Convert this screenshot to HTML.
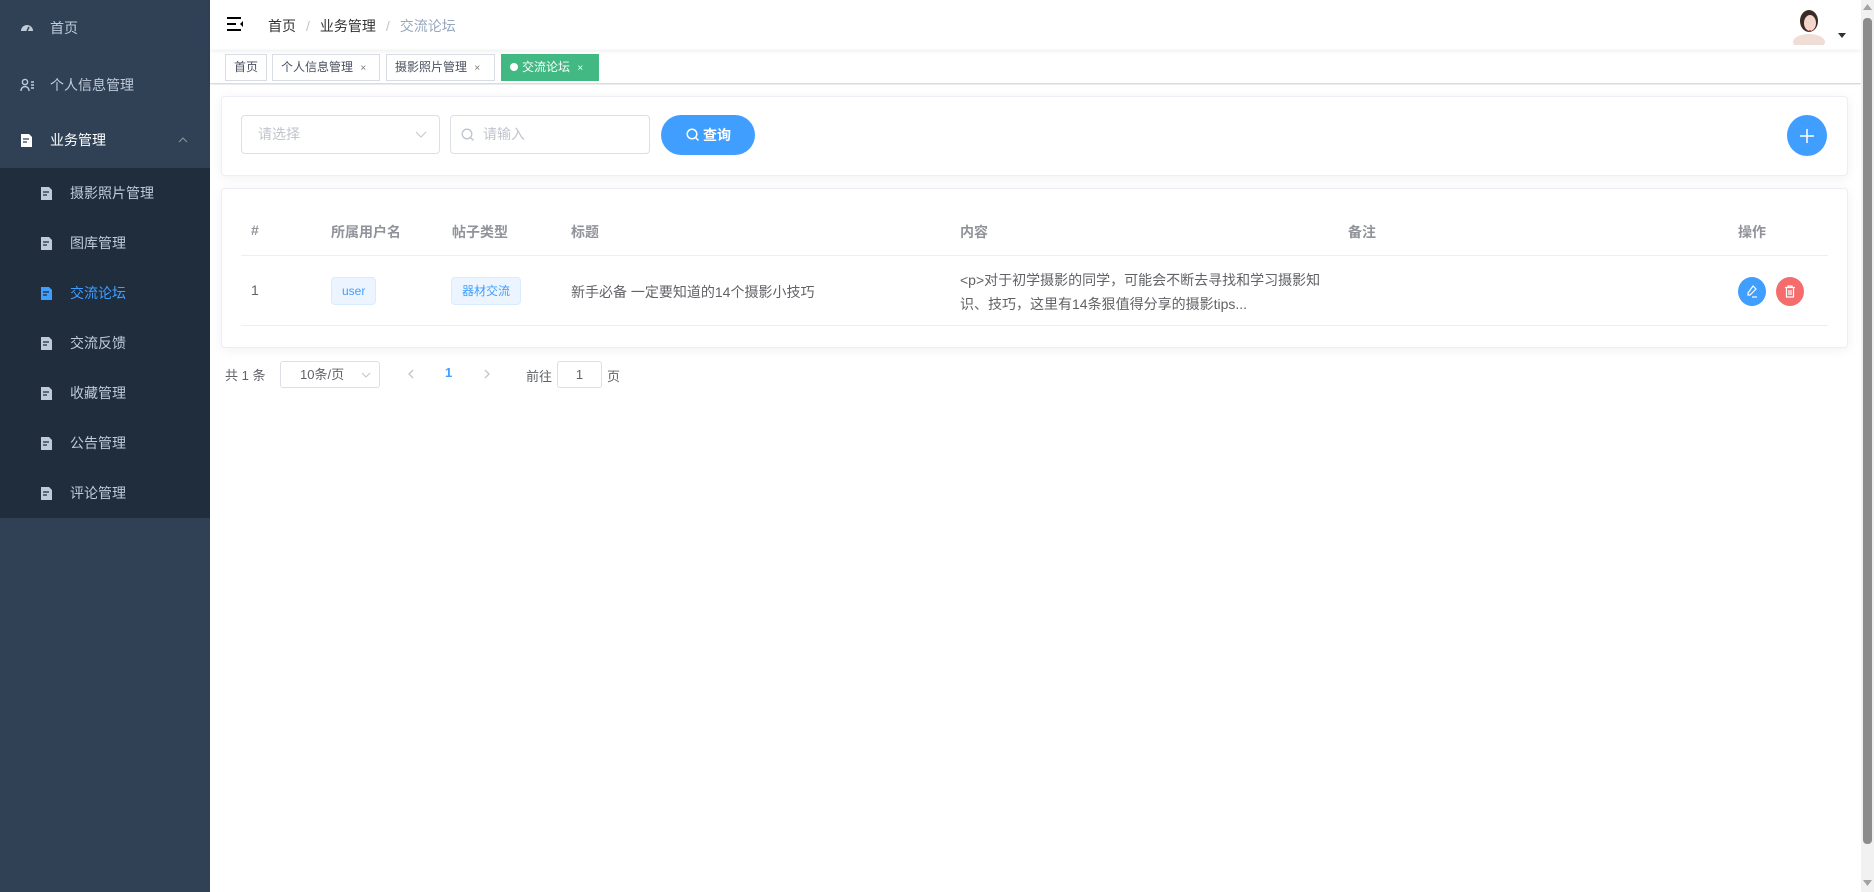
<!DOCTYPE html>
<html><head><meta charset="utf-8"><style>
*{box-sizing:border-box;margin:0;padding:0}
body{width:1874px;height:892px;overflow:hidden;font-family:"Liberation Sans","Noto Sans CJK SC",sans-serif;background:#fff;position:relative;color:#606266}
.abs{position:absolute}
.side{left:0;top:0;width:210px;height:892px;background:#304156}
.sub{left:0;top:168px;width:210px;height:350px;background:#1f2d3d}
.mi{position:absolute;left:0;width:210px;font-size:14px;color:#bfcbd9;display:flex;align-items:center}
.mi svg{position:absolute}
.mi span{position:absolute}
.tab{position:absolute;top:54px;height:27px;border:1px solid #d8dce5;font-size:12px;color:#495060;line-height:25px;padding:0 8px;background:#fff}
.card{position:absolute;background:#fff;border:1px solid #ebeef5;border-radius:4px;box-shadow:0 2px 12px rgba(0,0,0,.06)}
.th{position:absolute;top:222px;font-size:14px;color:#909399;font-weight:bold}
.td{position:absolute;font-size:14px;color:#606266}
.tag{position:absolute;top:277px;height:28px;line-height:26px;font-size:12px;color:#409eff;background:#ecf5ff;border:1px solid #d9ecff;border-radius:4px;padding:0 10px}
</style></head><body>
<div class="abs side"></div>
<div class="abs sub"></div>
<div class="mi" style="top:0;height:56px"><svg style="left:20px" width="14" height="14" viewBox="0 0 14 14"><path d="M1 10a6 6 0 1 1 12 0z" fill="#bfcbd9"/><path d="M7 10l2-4" stroke="#304156" stroke-width="1.5"/></svg><span style="left:50px;color:#bfcbd9">首页</span></div>
<div class="mi" style="top:57px;height:56px"><svg style="left:20px" width="15" height="14" viewBox="0 0 15 14" fill="none" stroke="#bfcbd9" stroke-width="1.4"><circle cx="5" cy="4" r="2.6"/><path d="M1 13c0-3 2-4.5 4-4.5s4 1.5 4 4.5M11 4h3M11 7h3M11 10h3"/></svg><span style="left:50px">个人信息管理</span></div>
<div class="mi" style="top:112px;height:56px"><svg style="left:20px" width="13" height="15" viewBox="0 0 13 15"><path d="M1 1h8l3 3v10H1z" fill="#fff"/><path d="M3 6h6M3 9h4" stroke="#304156" stroke-width="1.3"/></svg><span style="left:50px;color:#fff">业务管理</span><svg style="left:178px" width="10" height="6" viewBox="0 0 10 6"><path d="M1 5l4-4 4 4" stroke="#909399" fill="none"/></svg></div>
<div class="mi" style="top:168px;height:50px"><svg style="left:40px" width="13" height="15" viewBox="0 0 13 15"><path d="M1 1h8l3 3v10H1z" fill="#bfcbd9"/><path d="M3 6h6M3 9h4" stroke="#1f2d3d" stroke-width="1.3"/></svg><span style="left:70px">摄影照片管理</span></div>
<div class="mi" style="top:218px;height:50px"><svg style="left:40px" width="13" height="15" viewBox="0 0 13 15"><path d="M1 1h8l3 3v10H1z" fill="#bfcbd9"/><path d="M3 6h6M3 9h4" stroke="#1f2d3d" stroke-width="1.3"/></svg><span style="left:70px">图库管理</span></div>
<div class="mi" style="top:268px;height:50px;color:#409eff"><svg style="left:40px" width="13" height="15" viewBox="0 0 13 15"><path d="M1 1h8l3 3v10H1z" fill="#409eff"/><path d="M3 6h6M3 9h4" stroke="#1f2d3d" stroke-width="1.3"/></svg><span style="left:70px">交流论坛</span></div>
<div class="mi" style="top:318px;height:50px"><svg style="left:40px" width="13" height="15" viewBox="0 0 13 15"><path d="M1 1h8l3 3v10H1z" fill="#bfcbd9"/><path d="M3 6h6M3 9h4" stroke="#1f2d3d" stroke-width="1.3"/></svg><span style="left:70px">交流反馈</span></div>
<div class="mi" style="top:368px;height:50px"><svg style="left:40px" width="13" height="15" viewBox="0 0 13 15"><path d="M1 1h8l3 3v10H1z" fill="#bfcbd9"/><path d="M3 6h6M3 9h4" stroke="#1f2d3d" stroke-width="1.3"/></svg><span style="left:70px">收藏管理</span></div>
<div class="mi" style="top:418px;height:50px"><svg style="left:40px" width="13" height="15" viewBox="0 0 13 15"><path d="M1 1h8l3 3v10H1z" fill="#bfcbd9"/><path d="M3 6h6M3 9h4" stroke="#1f2d3d" stroke-width="1.3"/></svg><span style="left:70px">公告管理</span></div>
<div class="mi" style="top:468px;height:50px"><svg style="left:40px" width="13" height="15" viewBox="0 0 13 15"><path d="M1 1h8l3 3v10H1z" fill="#bfcbd9"/><path d="M3 6h6M3 9h4" stroke="#1f2d3d" stroke-width="1.3"/></svg><span style="left:70px">评论管理</span></div>

<div class="abs" style="left:210px;top:0;width:1651px;height:50px;background:#fff;box-shadow:0 1px 4px rgba(0,21,41,.08)"></div>
<svg class="abs" style="left:227px;top:17px" width="16" height="14" viewBox="0 0 16 14"><path d="M0 1h14M0 7h9M0 13h14" stroke="#000" stroke-width="2"/><path d="M16 4l-3 3 3 3z" fill="#000"/></svg>
<div class="abs" style="left:268px;top:16px;font-size:14px;color:#303133">首页<span style="color:#c0c4cc;margin:0 10px">/</span>业务管理<span style="color:#c0c4cc;margin:0 10px">/</span><span style="color:#97a8be">交流论坛</span></div>
<svg class="abs" style="left:1789px;top:4px" width="40" height="41" viewBox="0 0 40 41"><rect width="40" height="41" fill="#fff"/><ellipse cx="20" cy="38" rx="16" ry="8" fill="#f0ddd6"/><ellipse cx="20" cy="17" rx="9" ry="11" fill="#3b2b27"/><ellipse cx="21" cy="19" rx="6" ry="8" fill="#f2d6cb"/><circle cx="21" cy="27" r="1" fill="#d22"/></svg>
<svg class="abs" style="left:1838px;top:33px" width="8" height="5" viewBox="0 0 8 5"><path d="M0 0h8L4 5z" fill="#303133"/></svg>

<div class="abs" style="left:210px;top:50px;width:1651px;height:34px;border-bottom:1px solid #d8dce5;box-shadow:0 1px 3px rgba(0,0,0,.12)"></div>
<div class="tab" style="left:225px;width:42px">首页</div>
<div class="tab" style="left:272px;width:108px">个人信息管理 <span style="font-size:10px;margin-left:4px;color:#777">×</span></div>
<div class="tab" style="left:386px;width:109px">摄影照片管理 <span style="font-size:10px;margin-left:4px;color:#777">×</span></div>
<div class="tab" style="left:501px;width:98px;background:#42b983;border-color:#42b983;color:#fff"><span style="display:inline-block;width:8px;height:8px;border-radius:50%;background:#fff;margin-right:4px"></span>交流论坛 <span style="font-size:10px;margin-left:4px">×</span></div>

<div class="abs" style="left:210px;top:85px;width:1651px;height:807px;background:#fff"></div>

<div class="card" style="left:221px;top:96px;width:1627px;height:80px"></div>
<div class="abs" style="left:241px;top:115px;width:199px;height:39px;border:1px solid #dcdfe6;border-radius:4px;font-size:14px;color:#c0c4cc;line-height:37px;padding-left:16px">请选择<svg style="position:absolute;right:12px;top:15px" width="12" height="7" viewBox="0 0 12 7"><path d="M1 1l5 5 5-5" stroke="#c0c4cc" fill="none"/></svg></div>
<div class="abs" style="left:450px;top:115px;width:200px;height:39px;border:1px solid #dcdfe6;border-radius:4px;font-size:14px;color:#c0c4cc;line-height:37px;padding-left:32px"><svg style="position:absolute;left:10px;top:12px" width="14" height="14" viewBox="0 0 14 14"><circle cx="6" cy="6" r="4.8" stroke="#c0c4cc" stroke-width="1.3" fill="none"/><path d="M9.5 9.5l3 3" stroke="#c0c4cc" stroke-width="1.3"/></svg>请输入</div>
<div class="abs" style="left:661px;top:115px;width:94px;height:40px;border-radius:20px;background:#409eff;color:#fff;font-size:14px;font-weight:bold;line-height:40px;padding-left:42px"><svg style="position:absolute;left:25px;top:13px" width="14" height="14" viewBox="0 0 14 14"><circle cx="6" cy="6" r="4.8" stroke="#fff" stroke-width="1.5" fill="none"/><path d="M9.5 9.5l3 3" stroke="#fff" stroke-width="1.5"/></svg>查询</div>
<div class="abs" style="left:1787px;top:115px;width:40px;height:41px;border-radius:50%;background:#409eff"><svg style="position:absolute;left:12px;top:13px" width="16" height="16" viewBox="0 0 16 16"><path d="M8 1v14M1 8h14" stroke="#fff" stroke-width="1.5"/></svg></div>

<div class="card" style="left:221px;top:188px;width:1627px;height:160px"></div>
<div class="th" style="left:251px">#</div>
<div class="th" style="left:331px">所属用户名</div>
<div class="th" style="left:452px">帖子类型</div>
<div class="th" style="left:571px">标题</div>
<div class="th" style="left:960px">内容</div>
<div class="th" style="left:1348px">备注</div>
<div class="th" style="left:1738px">操作</div>
<div class="abs" style="left:241px;top:255px;width:1587px;height:1px;background:#ebeef5"></div>
<div class="abs" style="left:241px;top:325px;width:1587px;height:1px;background:#ebeef5"></div>
<div class="td" style="left:251px;top:282px">1</div>
<div class="tag" style="left:331px">user</div>
<div class="tag" style="left:451px">器材交流</div>
<div class="td" style="left:571px;top:282px">新手必备 一定要知道的14个摄影小技巧</div>
<div class="td" style="left:960px;top:268px;width:370px;line-height:24px">&lt;p&gt;对于初学摄影的同学，可能会不断去寻找和学习摄影知识、技巧，这里有14条狠值得分享的摄影tips...</div>
<div class="abs" style="left:1738px;top:277px;width:28px;height:29px;border-radius:50%;background:#409eff"><svg style="position:absolute;left:8px;top:8px" width="12" height="13" viewBox="0 0 12 13"><path d="M7 1l3 3-6 6H2V8z" stroke="#fff" fill="none" stroke-width="1.2"/><path d="M6 12h5" stroke="#fff" stroke-width="1.2"/></svg></div>
<div class="abs" style="left:1776px;top:277px;width:28px;height:29px;border-radius:50%;background:#f56c6c"><svg style="position:absolute;left:8px;top:8px" width="12" height="13" viewBox="0 0 12 13"><path d="M1 2.5h10M4 2.5V1h4v1.5M2.5 2.5v9.5h7V2.5M5 5v5M7 5v5" stroke="#fff" fill="none" stroke-width="1.2"/></svg></div>

<div class="abs" style="left:225px;top:365px;font-size:13px;color:#606266">共 1 条</div>
<div class="abs" style="left:280px;top:361px;width:100px;height:27px;border:1px solid #dcdfe6;border-radius:3px;font-size:13px;line-height:25px;padding-left:19px;color:#606266">10条/页<svg style="position:absolute;right:8px;top:10px" width="10" height="6" viewBox="0 0 10 6"><path d="M1 1l4 4 4-4" stroke="#c0c4cc" fill="none"/></svg></div>
<svg class="abs" style="left:408px;top:369px" width="6" height="10" viewBox="0 0 6 10"><path d="M5 1L1 5l4 4" stroke="#c0c4cc" fill="none" stroke-width="1.3"/></svg>
<div class="abs" style="left:445px;top:365px;font-size:13px;color:#409eff;font-weight:bold">1</div>
<svg class="abs" style="left:484px;top:369px" width="6" height="10" viewBox="0 0 6 10"><path d="M1 1l4 4-4 4" stroke="#c0c4cc" fill="none" stroke-width="1.3"/></svg>
<div class="abs" style="left:526px;top:366px;font-size:13px;color:#606266">前往</div>
<div class="abs" style="left:557px;top:361px;width:45px;height:27px;border:1px solid #dcdfe6;border-radius:3px;font-size:13px;line-height:25px;text-align:center;color:#606266">1</div>
<div class="abs" style="left:607px;top:366px;font-size:13px;color:#606266">页</div>

<div class="abs" style="left:1861px;top:0;width:13px;height:892px;background:#f1f1f1"></div>
<div class="abs" style="left:1863px;top:18px;width:9px;height:826px;background:#8c8c8c;border-radius:4px"></div>
<svg class="abs" style="left:1863px;top:4px" width="9" height="6" viewBox="0 0 9 6"><path d="M0 6h9L4.5 0z" fill="#a3a3a3"/></svg>
<svg class="abs" style="left:1863px;top:880px" width="9" height="6" viewBox="0 0 9 6"><path d="M0 0h9L4.5 6z" fill="#a3a3a3"/></svg>
</body></html>
